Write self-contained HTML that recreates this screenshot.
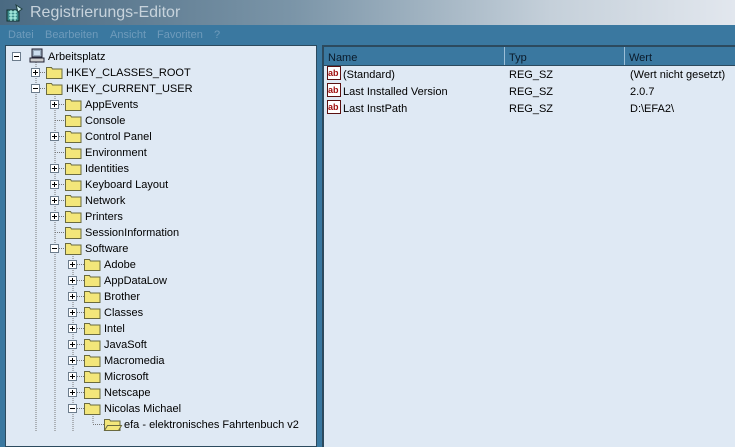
<!DOCTYPE html>
<html><head><meta charset="utf-8"><style>
body{margin:0;width:735px;height:432px;overflow:hidden;background:#3a78a0;font-family:"Liberation Sans",sans-serif;font-size:11px;position:relative}
.t{position:absolute;white-space:nowrap;color:#000;line-height:16px;margin-top:1px}
#title{position:absolute;left:0;top:0;width:735px;height:25px;background:linear-gradient(90deg,#4a6a82 0%,#7b95a8 40%,#c5d0da 75%,#e2e7ee 100%)}
#menu{position:absolute;left:0;top:25px;width:735px;height:18px;background:#3a78a0}
#left{position:absolute;left:5px;top:45px;width:310px;height:400px;background:#dfe9f4;border:1px solid #2c4a5e}
#right{position:absolute;left:322px;top:45px;width:420px;height:400px;background:#dfe9f4;border-left:2px solid #2c4a5e;border-top:2px solid #2c4a5e}
#hdr{position:absolute;left:324px;top:47px;width:411px;height:18px;background:#3a78a0;border-bottom:1px solid #2c4a5e}
.sep{position:absolute;top:47px;width:1px;height:18px;background:#9cbfd8}
</style></head><body>
<div id="title"></div>
<svg style="position:absolute;left:6px;top:4px" width="18" height="18" viewBox="0 0 18 18"><rect x="1" y="6" width="12" height="11" fill="#3c8c8c" stroke="#103030"/><path d="M3 8h8M3 11h8M3 14h8M5 6v11M9 6v11" stroke="#bfe" stroke-width="1"/><path d="M10 1l6 4-4 3z" fill="#d0f0f0" stroke="#204040"/></svg>
<div class="t" style="left:30px;top:3px;font-size:16px;color:#c7d3dc;line-height:18px">Registrierungs-Editor</div>
<div id="menu"></div>
<div class="t" style="left:8px;top:26px;color:#6f9bbb">Datei</div>
<div class="t" style="left:45px;top:26px;color:#6f9bbb">Bearbeiten</div>
<div class="t" style="left:110px;top:26px;color:#6f9bbb">Ansicht</div>
<div class="t" style="left:157px;top:26px;color:#6f9bbb">Favoriten</div>
<div class="t" style="left:214px;top:26px;color:#6f9bbb">?</div>
<div id="left"></div>
<div id="right"></div>
<div id="hdr"></div>
<div class="sep" style="left:504px"></div><div class="sep" style="left:624px"></div>
<div class="t" style="left:328px;top:49px;color:#0a1a2a">Name</div>
<div class="t" style="left:509px;top:49px;color:#0a1a2a">Typ</div>
<div class="t" style="left:629px;top:49px;color:#0a1a2a">Wert</div>

<svg style="position:absolute;left:0;top:0" width="735" height="432">
<g fill="#fff" stroke="#5a1010">
<rect x="327.5" y="66.5" width="13" height="13"/><rect x="327.5" y="83.5" width="13" height="13"/><rect x="327.5" y="100.5" width="13" height="13"/>
</g>
<g font-family="Liberation Sans" font-weight="bold" font-size="9" fill="#a01010"><text x="328" y="76">ab</text><text x="328" y="93">ab</text><text x="328" y="110">ab</text></g>
<g stroke="#777" stroke-dasharray="1,1" fill="none">
<path d="M36 62V432M55 94V432M73 254V432M93 414V424M36 72.5h10M36 88.5h10M55 104.5h10M55 120.5h10M55 136.5h10M55 152.5h10M55 168.5h10M55 184.5h10M55 200.5h10M55 216.5h10M55 232.5h10M55 248.5h10"/>
<path d="M73 264.5h11M73 280.5h11M73 296.5h11M73 312.5h11M73 328.5h11M73 344.5h11M73 360.5h11M73 376.5h11M73 392.5h11M73 408.5h11M93 424.5h11"/>
</g>
<g fill="#fff" stroke="#6c7c8c">
<rect x="12.5" y="52.5" width="8" height="8"/>
<rect x="31.5" y="68.5" width="8" height="8"/><rect x="31.5" y="84.5" width="8" height="8"/>
<rect x="50.5" y="100.5" width="8" height="8"/><rect x="50.5" y="132.5" width="8" height="8"/><rect x="50.5" y="164.5" width="8" height="8"/><rect x="50.5" y="180.5" width="8" height="8"/><rect x="50.5" y="196.5" width="8" height="8"/><rect x="50.5" y="212.5" width="8" height="8"/><rect x="50.5" y="244.5" width="8" height="8"/>
<rect x="68.5" y="260.5" width="8" height="8"/><rect x="68.5" y="276.5" width="8" height="8"/><rect x="68.5" y="292.5" width="8" height="8"/><rect x="68.5" y="308.5" width="8" height="8"/><rect x="68.5" y="324.5" width="8" height="8"/><rect x="68.5" y="340.5" width="8" height="8"/><rect x="68.5" y="356.5" width="8" height="8"/><rect x="68.5" y="372.5" width="8" height="8"/><rect x="68.5" y="388.5" width="8" height="8"/><rect x="68.5" y="404.5" width="8" height="8"/>
</g>
<g stroke="#000">
<path d="M14 56.5h5M33 72.5h5M35.5 70v5M33 88.5h5M52 104.5h5M54.5 102v5M52 136.5h5M54.5 134v5M52 168.5h5M54.5 166v5M52 184.5h5M54.5 182v5M52 200.5h5M54.5 198v5M52 216.5h5M54.5 214v5M52 248.5h5"/>
<path d="M70 264.5h5M72.5 262v5M70 280.5h5M72.5 278v5M70 296.5h5M72.5 294v5M70 312.5h5M72.5 310v5M70 328.5h5M72.5 326v5M70 344.5h5M72.5 342v5M70 360.5h5M72.5 358v5M70 376.5h5M72.5 374v5M70 392.5h5M72.5 390v5M70 408.5h5"/>
</g>
<g fill="#f3e67a" stroke="#6a6a40">
<path d="M46.5 67.5h5l1 1.5h9.5v9.5h-15.5z"/>
<path d="M46.5 83.5h5l1 1.5h9.5v9.5h-15.5z"/>
<path d="M65.5 99.5h5l1 1.5h9.5v9.5h-15.5z"/><path d="M65.5 115.5h5l1 1.5h9.5v9.5h-15.5z"/><path d="M65.5 131.5h5l1 1.5h9.5v9.5h-15.5z"/><path d="M65.5 147.5h5l1 1.5h9.5v9.5h-15.5z"/><path d="M65.5 163.5h5l1 1.5h9.5v9.5h-15.5z"/><path d="M65.5 179.5h5l1 1.5h9.5v9.5h-15.5z"/><path d="M65.5 195.5h5l1 1.5h9.5v9.5h-15.5z"/><path d="M65.5 211.5h5l1 1.5h9.5v9.5h-15.5z"/><path d="M65.5 227.5h5l1 1.5h9.5v9.5h-15.5z"/><path d="M65.5 243.5h5l1 1.5h9.5v9.5h-15.5z"/>
<path d="M84.5 259.5h5l1 1.5h9.5v9.5h-15.5z"/><path d="M84.5 275.5h5l1 1.5h9.5v9.5h-15.5z"/><path d="M84.5 291.5h5l1 1.5h9.5v9.5h-15.5z"/><path d="M84.5 307.5h5l1 1.5h9.5v9.5h-15.5z"/><path d="M84.5 323.5h5l1 1.5h9.5v9.5h-15.5z"/><path d="M84.5 339.5h5l1 1.5h9.5v9.5h-15.5z"/><path d="M84.5 355.5h5l1 1.5h9.5v9.5h-15.5z"/><path d="M84.5 371.5h5l1 1.5h9.5v9.5h-15.5z"/><path d="M84.5 387.5h5l1 1.5h9.5v9.5h-15.5z"/><path d="M84.5 403.5h5l1 1.5h9.5v9.5h-15.5z"/>
<path d="M104.5 419.5h5l1 1.5h9.5v9.5h-15.5z"/><path d="M104.5 430.5l3-5h14l-3 5z"/>
</g>
<g><rect x="32" y="49" width="10" height="8" fill="#9ab" stroke="#223"/><rect x="34" y="51" width="6" height="4" fill="#cde"/><rect x="30" y="58" width="14" height="4" fill="#ccc" stroke="#223"/></g>
</svg>

<div class="t" style="left:48px;top:48px">Arbeitsplatz</div>
<div class="t" style="left:66px;top:64px">HKEY_CLASSES_ROOT</div>
<div class="t" style="left:66px;top:80px">HKEY_CURRENT_USER</div>
<div class="t" style="left:85px;top:96px">AppEvents</div>
<div class="t" style="left:85px;top:112px">Console</div>
<div class="t" style="left:85px;top:128px">Control Panel</div>
<div class="t" style="left:85px;top:144px">Environment</div>
<div class="t" style="left:85px;top:160px">Identities</div>
<div class="t" style="left:85px;top:176px">Keyboard Layout</div>
<div class="t" style="left:85px;top:192px">Network</div>
<div class="t" style="left:85px;top:208px">Printers</div>
<div class="t" style="left:85px;top:224px">SessionInformation</div>
<div class="t" style="left:85px;top:240px">Software</div>
<div class="t" style="left:104px;top:256px">Adobe</div>
<div class="t" style="left:104px;top:272px">AppDataLow</div>
<div class="t" style="left:104px;top:288px">Brother</div>
<div class="t" style="left:104px;top:304px">Classes</div>
<div class="t" style="left:104px;top:320px">Intel</div>
<div class="t" style="left:104px;top:336px">JavaSoft</div>
<div class="t" style="left:104px;top:352px">Macromedia</div>
<div class="t" style="left:104px;top:368px">Microsoft</div>
<div class="t" style="left:104px;top:384px">Netscape</div>
<div class="t" style="left:104px;top:400px">Nicolas Michael</div>
<div class="t" style="left:124px;top:416px">efa - elektronisches Fahrtenbuch v2</div>

<div class="t" style="left:343px;top:66px">(Standard)</div>
<div class="t" style="left:343px;top:83px">Last Installed Version</div>
<div class="t" style="left:343px;top:100px">Last InstPath</div>
<div class="t" style="left:509px;top:66px">REG_SZ</div>
<div class="t" style="left:509px;top:83px">REG_SZ</div>
<div class="t" style="left:509px;top:100px">REG_SZ</div>
<div class="t" style="left:630px;top:66px">(Wert nicht gesetzt)</div>
<div class="t" style="left:630px;top:83px">2.0.7</div>
<div class="t" style="left:630px;top:100px">D:\EFA2\</div>
</body></html>
